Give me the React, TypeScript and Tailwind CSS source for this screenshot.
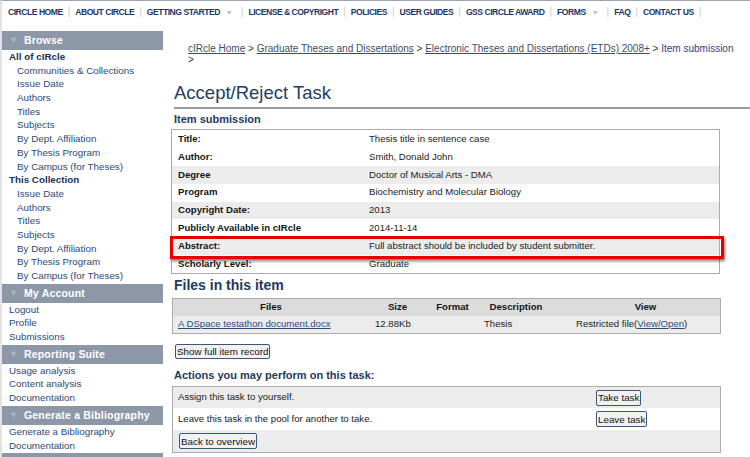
import React from "react";

const navItems: { label: string; caret?: boolean }[] = [
  { label: "CIRCLE HOME" },
  { label: "ABOUT CIRCLE" },
  { label: "GETTING STARTED", caret: true },
  { label: "LICENSE & COPYRIGHT" },
  { label: "POLICIES" },
  { label: "USER GUIDES" },
  { label: "GSS CIRCLE AWARD" },
  { label: "FORMS", caret: true },
  { label: "FAQ" },
  { label: "CONTACT US" },
];

function SideHeader({ title }: { title: string }) {
  return (
    <div className="h-[19px] bg-[#8c98a8] flex items-center pl-[7px] mt-[1px]">
      <span className="text-[#aab3bf] text-[9px] leading-none mr-[6px]">▼</span>
      <span className="text-white font-bold text-[10.5px] tracking-[0.2px] leading-none">{title}</span>
    </div>
  );
}

function SideBold({ children }: { children: React.ReactNode }) {
  return (
    <div className="h-[13.7px] leading-[13.7px] pl-[7px] text-[9.8px] font-bold text-[#1b3257]">{children}</div>
  );
}

function SideLink({ children, indent }: { children: React.ReactNode; indent?: boolean }) {
  return (
    <div
      className={
        "h-[13.7px] leading-[13.7px] text-[9.8px] text-[#2d4a72] " + (indent ? "pl-[15px]" : "pl-[7px]")
      }
    >
      {children}
    </div>
  );
}

const browseItems = [
  "Issue Date",
  "Authors",
  "Titles",
  "Subjects",
  "By Dept. Affiliation",
  "By Thesis Program",
  "By Campus (for Theses)",
];

const meta: [string, string, boolean][] = [
  ["Title:", "Thesis title in sentence case", false],
  ["Author:", "Smith, Donald John", false],
  ["Degree", "Doctor of Musical Arts - DMA", true],
  ["Program", "Biochemistry and Molecular Biology", false],
  ["Copyright Date:", "2013", true],
  ["Publicly Available in cIRcle", "2014-11-14", false],
  ["Abstract:", "Full abstract should be included by student submitter.", true],
  ["Scholarly Level:", "Graduate", false],
];

function Btn({ children, className = "" }: { children: React.ReactNode; className?: string }) {
  return (
    <button
      className={
        "h-[15px] px-[1px] border border-[#3d5677] rounded-[2px] bg-[#f2f2f2] text-[9.8px] leading-[13px] text-[#111] " +
        className
      }
    >
      {children}
    </button>
  );
}

export default function App() {
  return (
    <div className="w-[750px] h-[457px] overflow-hidden bg-white border-t border-l-2 border-t-[#9ba6b5] border-l-[#e2e2e2] font-['Liberation_Sans',Arial,sans-serif]">
      {/* top nav */}
      <nav className="h-[29px] flex items-start pt-[6px] pl-[6px]">
        {navItems.map((n, i) => (
          <div key={i} className="flex items-center h-[10px]">
            <span className="text-[8.6px] font-bold text-[#1d3763] tracking-[-0.5px] leading-[10px] whitespace-nowrap">
              {n.label}
            </span>
            {n.caret && <span className="text-[7px] text-[#b5bcc6] ml-[6px] mr-[3px] leading-none">▼</span>}
            <span className="text-[#c8cdd4] text-[10px] leading-[10px] mx-[5px]">|</span>
          </div>
        ))}
      </nav>

      <div className="flex">
        {/* sidebar */}
        <aside className="w-[161px] shrink-0">
          <SideHeader title="Browse" />
          <SideBold>All of cIRcle</SideBold>
          <SideLink indent>Communities &amp; Collections</SideLink>
          {browseItems.map((b) => (
            <SideLink key={"a" + b} indent>
              {b}
            </SideLink>
          ))}
          <SideBold>This Collection</SideBold>
          {browseItems.map((b) => (
            <SideLink key={"b" + b} indent>
              {b}
            </SideLink>
          ))}
          <SideHeader title="My Account" />
          <SideLink>Logout</SideLink>
          <SideLink>Profile</SideLink>
          <SideLink>Submissions</SideLink>
          <SideHeader title="Reporting Suite" />
          <SideLink>Usage analysis</SideLink>
          <SideLink>Content analysis</SideLink>
          <SideLink>Documentation</SideLink>
          <SideHeader title="Generate a Bibliography" />
          <SideLink>Generate a Bibliography</SideLink>
          <SideLink>Documentation</SideLink>
          <SideHeader title="File Conversion" />
        </aside>

        {/* main */}
        <main className="flex-1 pl-[8px]">
          <div className="pl-[17px] pt-[14px] text-[10px] leading-[10.5px] text-[#333] pr-[10px]">
            <span className="text-[#3b4d6d] underline">cIRcle Home</span> &gt;{" "}
            <span className="text-[#3b4d6d] underline">Graduate Theses and Dissertations</span> &gt;{" "}
            <span className="text-[#3b4d6d] underline">Electronic Theses and Dissertations (ETDs) 2008+</span> &gt;{" "}
            <span className="text-[#2b3f8e]">Item submission</span>
            <br />
            &gt;
          </div>

          <h1 className="ml-[3px] mt-[17px] text-[18.5px] leading-[22px] text-[#243e5e] pb-[3px] border-b-2 border-[#9b9b9b]">
            Accept/Reject Task
          </h1>

          <div className="ml-[3px] mt-[4px] text-[11px] font-bold leading-[13px] text-[#1e3a5e]">Item submission</div>

          <div className="relative mt-[3px] w-[549px] border border-[#ababab]">
            {meta.map(([k, v, g], i) => (
              <div
                key={i}
                className={"grid grid-cols-[191px_1fr] h-[17.9px] items-center " + (g ? "bg-[#ececec]" : "bg-white")}
              >
                <div className="pl-[6px] text-[9.6px] font-bold text-[#151515] whitespace-nowrap">{k}</div>
                <div className="pl-[6px] text-[9.6px] text-[#222] whitespace-nowrap">{v}</div>
              </div>
            ))}
            <div className="absolute left-[-2px] top-[106px] w-[554px] h-[23px] border-[3px] border-[#e80000] shadow-[1px_2px_3px_rgba(0,0,0,0.55)]" />
          </div>

          <div className="ml-[3px] mt-[3px] text-[14px] font-bold leading-[16px] text-[#1e3a5e]">Files in this item</div>

          <div className="mt-[5px] ml-[1px] w-[549px] border border-[#ababab] text-[9.6px]">
            <div className="grid grid-cols-[196px_57px_53px_92px_1fr] h-[17px] items-center bg-[#dcdcdc] font-bold text-[#151515]">
              <div className="text-center">Files</div>
              <div className="text-center">Size</div>
              <div className="text-center">Format</div>
              <div className="text-center pr-[18px]">Description</div>
              <div className="text-center">View</div>
            </div>
            <div className="grid grid-cols-[196px_57px_53px_92px_1fr] h-[17px] items-center bg-[#ececec] text-[#222]">
              <div className="pl-[5px] text-[#2b4a7a] underline whitespace-nowrap">A DSpace testathon document.docx</div>
              <div className="pl-[6px]">12.88Kb</div>
              <div></div>
              <div className="pl-[5px]">Thesis</div>
              <div className="pl-[5px] whitespace-nowrap">
                Restricted file(<span className="text-[#2b4a7a] underline">View/Open</span>)
              </div>
            </div>
          </div>

          <div className="mt-[10px] ml-[4px] flex">
            <Btn>Show full item record</Btn>
          </div>

          <div className="ml-[3px] mt-[9px] text-[11px] font-bold leading-[14px] text-[#1e3a5e]">
            Actions you may perform on this task:
          </div>

          <div className="mt-[4px] ml-[1px] w-[549px] border border-[#ababab] text-[9.6px] text-[#222]">
            <div className="grid grid-cols-[423px_1fr] h-[21px] items-center bg-[#ececec]">
              <div className="pl-[5px]">Assign this task to yourself.</div>
              <div className="flex">
                <Btn className="h-[16px]">Take task</Btn>
              </div>
            </div>
            <div className="grid grid-cols-[423px_1fr] h-[22px] items-center bg-white">
              <div className="pl-[5px]">Leave this task in the pool for another to take.</div>
              <div className="flex">
                <Btn className="h-[16px]">Leave task</Btn>
              </div>
            </div>
            <div className="h-[22px] flex items-center bg-[#ececec] pl-[6px]">
              <Btn className="h-[16px]">Back to overview</Btn>
            </div>
          </div>
        </main>
      </div>
    </div>
  );
}
